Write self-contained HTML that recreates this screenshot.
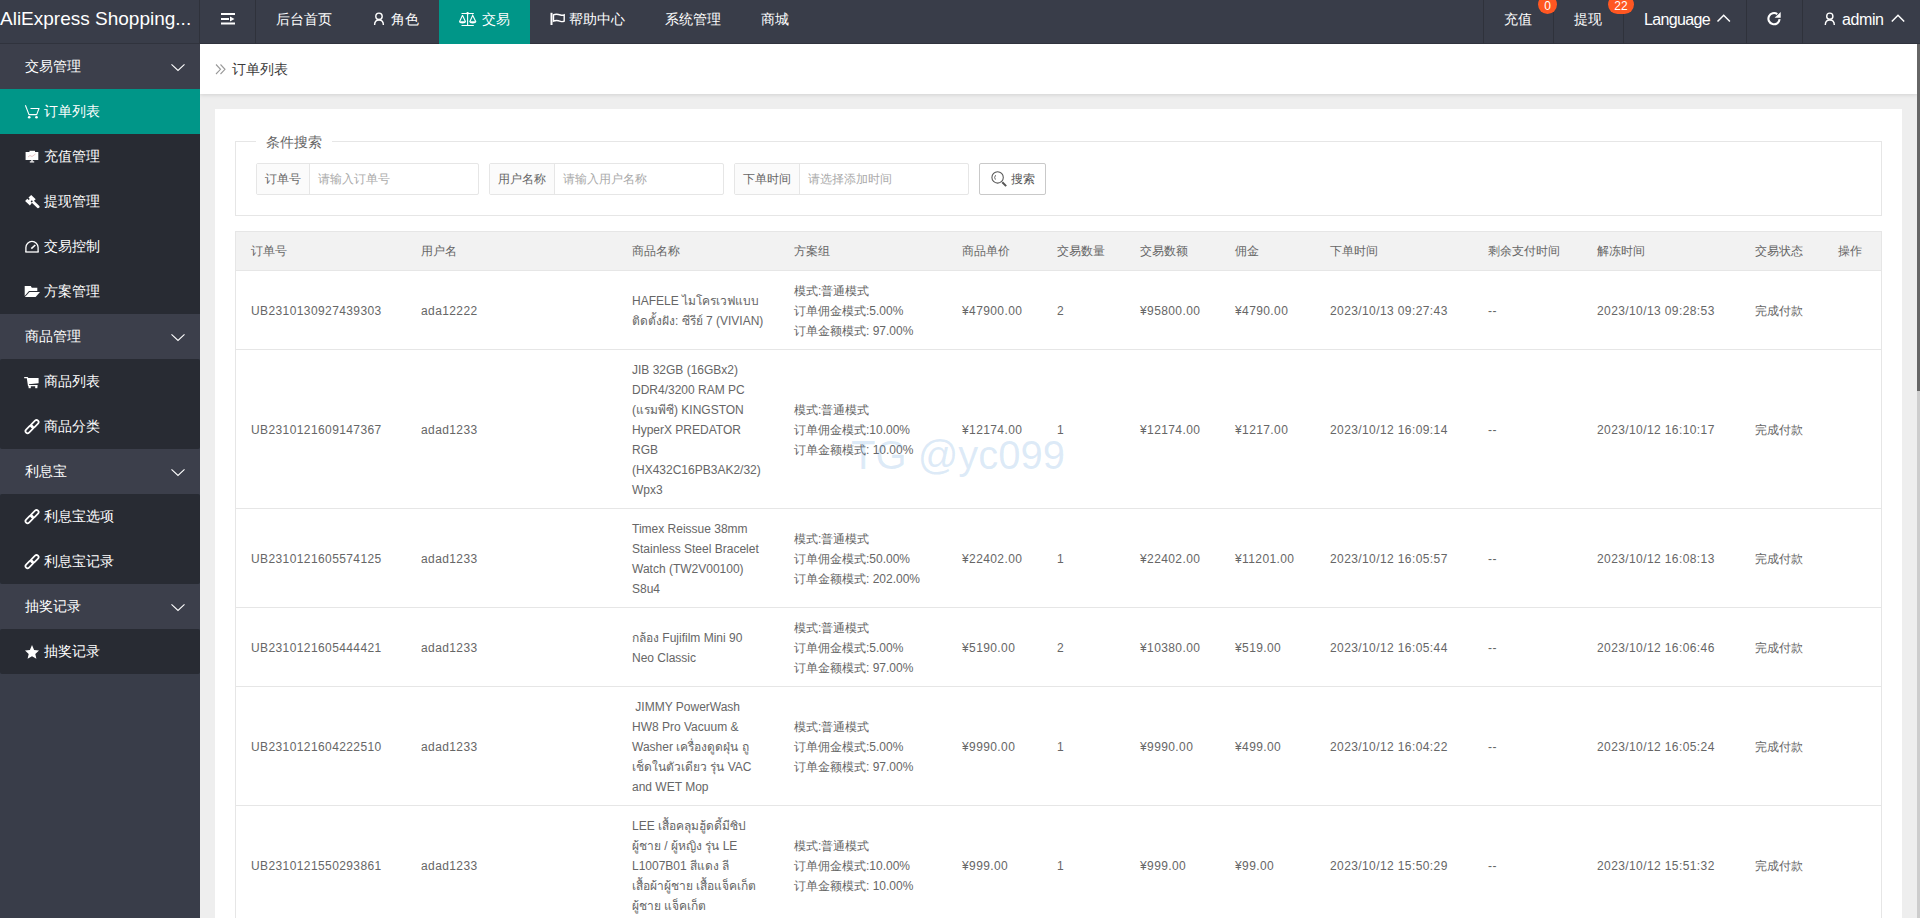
<!DOCTYPE html>
<html><head><meta charset="utf-8">
<style>
*{box-sizing:border-box;margin:0;padding:0}
html,body{width:1920px;height:918px;overflow:hidden;background:#eeeeee;font-family:"Liberation Sans",sans-serif;}
.hdr{position:absolute;left:0;top:0;width:1920px;height:44px;background:#393D49;color:#fff;font-size:14px}
.logo{position:absolute;left:0;top:0;width:200px;height:44px;line-height:38px;font-size:19px;white-space:nowrap;overflow:hidden;color:#fff}
.sep{position:absolute;top:0;width:1px;height:44px;background:#2f323b}
.nv{position:absolute;top:0;height:44px;line-height:39px;white-space:nowrap;color:#fff}
.nv svg{position:absolute}
.act{background:#009688}
.badge{position:absolute;background:#FF5722;color:#fff;font-size:12px;line-height:18px;height:18px;text-align:center;border-radius:9px}
.side{position:absolute;left:0;top:44px;width:200px;height:874px;background:#393D49;color:#fff;font-size:14px}
.grp{position:absolute;left:0;width:200px;height:45px;line-height:45px;background:#3C3F4B}
.sub{position:absolute;left:0;width:200px;background:#282B33;border-radius:2px}
.it{position:absolute;left:0;width:200px;height:45px;line-height:45px}
.it svg,.grp svg{position:absolute}
.main{position:absolute;left:200px;top:44px;width:1717px;height:874px;background:#eeeeee;overflow:hidden}
.bc{position:absolute;left:0;top:0;width:1717px;height:50px;background:#fff;box-shadow:0 1px 4px rgba(0,0,0,.12);font-size:14px;color:#333}
.card{position:absolute;left:15px;top:65px;width:1687px;height:900px;background:#fff}
.scroll{position:absolute;left:1917px;top:44px;width:3px;height:874px;background:#cdcdcd}
.thumb{position:absolute;left:1917px;top:44px;width:3px;height:347px;background:#666}
.fs{position:absolute;border:1px solid #e6e6e6}
.lg{position:absolute}
.ig{position:absolute;height:32px;border:1px solid #e6e6e6;border-radius:2px;background:#fff;font-size:12px}
.lb{position:absolute;left:0;top:0;height:30px;line-height:30px;background:#FBFBFB;border-right:1px solid #e6e6e6;color:#666;text-align:center}
.ph{position:absolute;left:0;top:0;height:30px;line-height:30px;color:#aaa}
.btn{position:absolute;height:32px;border:1px solid #C9C9C9;border-radius:2px;background:#fff;font-size:12px;color:#555}
.tbl{position:absolute;border:1px solid #e6e6e6;border-bottom:none;background:#fff}
.th{position:absolute;background:#f2f2f2}
.hl{position:absolute;height:1px;background:#e6e6e6}
.c{position:absolute;display:flex;align-items:center;white-space:nowrap;font-size:12px;line-height:20px;color:#666}
.l{letter-spacing:0.4px}
.wm{position:absolute;font-size:40px;line-height:46px;color:rgba(100,160,220,0.22);white-space:nowrap}
</style></head><body>
<div class="hdr">
  <div class="logo">AliExpress Shopping...</div>
  <div style="position:absolute;left:0;top:43px;width:1920px;height:1px;background:#30333D"></div>
  <div class="sep" style="left:199px"></div>
  <div class="sep" style="left:255px"></div>
  <svg style="position:absolute;left:0;top:0" width="1920" height="44">
    <g fill="#fff">
      <rect x="221" y="13" width="14" height="2"/>
      <rect x="221" y="18" width="8" height="2"/>
      <path d="M230 16.5 L234.5 19 L230 21.5 Z"/>
      <rect x="221" y="22.5" width="14" height="2"/>
    </g>
    <rect x="439" y="0" width="91" height="44" fill="#009688"/>
    <g fill="none" stroke="#fff" stroke-width="1.4">
      <circle cx="379" cy="16.3" r="3.2"/>
      <path d="M374.6 25 C374.6 21.8 376.3 20 379 20 C381.7 20 383.4 21.8 383.4 25"/>
    </g>
    <g fill="none" stroke="#fff" stroke-width="1.1">
      <path d="M461.5 13.5 H473.8 M467.6 13 V25.5 M461.5 25.5 H473.8"/>
      <path d="M462.5 15.3 L459.5 21.8 M462.5 15.3 L465.5 21.8 M469.8 21.8 L472.7 15.3 L475.8 21.8"/>
    </g>
    <g fill="#fff">
      <path d="M459 21.3 H466 C466 23 464.6 23.4 462.5 23.4 C460.4 23.4 459 23 459 21.3Z"/>
      <path d="M469.3 21.3 H476.3 C476.3 23 474.9 23.4 472.8 23.4 C470.7 23.4 469.3 23 469.3 21.3Z"/>
      <circle cx="467.6" cy="13.2" r="1.2"/>
    </g>
    <g fill="none" stroke="#fff">
      <path d="M551.5 12.8 V25" stroke-width="2"/>
      <path d="M553.5 14.8 C556 13.6 558.5 14.3 560.5 15 C562 15.5 563.3 15.2 564.2 14.8 V21.2 C563.3 21.6 562 21.9 560.5 21.3 C558.5 20.6 556 20 553.5 21.2 Z" stroke-width="1.4"/>
    </g>
    <g fill="none" stroke="#fff" stroke-width="1.5">
      <path d="M1717.5 21.5 L1723.7 15.3 L1729.9 21.5"/>
      <path d="M1891.8 21.5 L1898 15.3 L1904.2 21.5"/>
      <circle cx="1829.8" cy="16.2" r="3.1" stroke-width="1.4"/>
      <path d="M1825.3 25 C1825.3 21.8 1827 20 1829.8 20 C1832.6 20 1834.3 21.8 1834.3 25" stroke-width="1.4"/>
      <path d="M1779.6 19.2 A5.6 5.6 0 1 1 1777.3 14.1" stroke-width="2.1"/>
    </g>
    <path d="M1774.6 17.8 L1780.7 12.1 L1780.7 17.8 Z" fill="#fff"/>
  </svg>
  <div class="nv" style="left:276px">后台首页</div>
  <div class="nv" style="left:391px">角色</div>
  <div class="nv" style="left:482px">交易</div>
  <div class="nv" style="left:569px">帮助中心</div>
  <div class="nv" style="left:665px">系统管理</div>
  <div class="nv" style="left:761px">商城</div>
  <div class="sep" style="left:1483px"></div>
  <div class="sep" style="left:1553px"></div>
  <div class="sep" style="left:1623px"></div>
  <div class="sep" style="left:1746px"></div>
  <div class="sep" style="left:1802px"></div>
  <div class="nv" style="left:1504px">充值</div>
  <div class="nv" style="left:1574px">提现</div>
  <div class="badge" style="left:1538px;top:-5px;width:19px;height:19px;line-height:23px;border-radius:50%">0</div>
  <div class="badge" style="left:1608px;top:-5px;width:26px;height:19px;line-height:23px;border-radius:10px">22</div>
  <div class="nv" style="left:1644px;font-size:16px;letter-spacing:-0.65px;line-height:40px">Language</div>
  <div class="nv" style="left:1842px;font-size:16px;letter-spacing:-0.4px;line-height:40px">admin</div>
</div>
<div class="side">
  <div class="grp" style="top:0">
    <span style="position:absolute;left:25px">交易管理</span>
  </div>
  <div class="sub" style="top:45px;height:270px">
    <div class="it" style="top:0;background:#009688;border-radius:0"><span style="position:absolute;left:44px">订单列表</span></div>
    <div class="it" style="top:45px"><span style="position:absolute;left:44px">充值管理</span></div>
    <div class="it" style="top:90px"><span style="position:absolute;left:44px">提现管理</span></div>
    <div class="it" style="top:135px"><span style="position:absolute;left:44px">交易控制</span></div>
    <div class="it" style="top:180px"><span style="position:absolute;left:44px">方案管理</span></div>
  </div>
  <div class="grp" style="top:270px"><span style="position:absolute;left:25px">商品管理</span></div>
  <div class="sub" style="top:315px;height:90px">
    <div class="it" style="top:0"><span style="position:absolute;left:44px">商品列表</span></div>
    <div class="it" style="top:45px"><span style="position:absolute;left:44px">商品分类</span></div>
  </div>
  <div class="grp" style="top:405px"><span style="position:absolute;left:25px">利息宝</span></div>
  <div class="sub" style="top:450px;height:90px">
    <div class="it" style="top:0"><span style="position:absolute;left:44px">利息宝选项</span></div>
    <div class="it" style="top:45px"><span style="position:absolute;left:44px">利息宝记录</span></div>
  </div>
  <div class="grp" style="top:540px"><span style="position:absolute;left:25px">抽奖记录</span></div>
  <div class="sub" style="top:585px;height:45px">
    <div class="it" style="top:0"><span style="position:absolute;left:44px">抽奖记录</span></div>
  </div>
  <svg style="position:absolute;left:0;top:0" width="200" height="874">
    <g fill="none" stroke="#fff" stroke-width="1.1">
      <path d="M171.5 20.3 L178 26.5 L184.5 20.3"/>
      <path d="M171.5 290.3 L178 296.5 L184.5 290.3"/>
      <path d="M171.5 425.3 L178 431.5 L184.5 425.3"/>
      <path d="M171.5 560.3 L178 566.5 L184.5 560.3"/>
    </g>
    <g fill="none" stroke="#fff" stroke-width="1.1" stroke-linejoin="round">
      <path d="M25.4 61.2 L29 70.6 H36.7 L39 64.5 H30.5"/>
    </g>
    <g fill="#fff">
      <circle cx="29.2" cy="73.3" r="1.3"/><circle cx="36.5" cy="73.3" r="1.3"/>
    </g>
    <g fill="#fff">
      <rect x="25.6" y="108" width="12.7" height="8"/>
      <rect x="29.5" y="106.8" width="5.5" height="1.5"/>
      <rect x="31.3" y="116" width="1.4" height="1.6"/>
      <rect x="29.8" y="117.3" width="4.4" height="1.2"/>
    </g>
    <path d="M28 113 L30 111.5 L32 112.5 L35.5 110" stroke="#d8a0a0" stroke-width="0.6" fill="none"/>
    <g fill="#fff">
      <path d="M31.2 151 L35.7 155.2 L33.2 157.5 L31.8 156.2 L30.6 157.4 L32 158.8 L29.9 161.4 L25.1 157 L27.3 154.8 L28.6 156.1 L29.8 154.9 L28.5 153.6 Z"/>
      <path d="M31.6 158.6 L33.6 156.6 L39.4 162 C39.8 162.5 39.6 163.3 39 163.8 C38.5 164.2 37.9 164.3 37.4 163.9 Z"/>
    </g>
    <g fill="none" stroke="#fff" stroke-width="1.3">
      <path d="M25.9 208 V203.5 A6.1 6.1 0 0 1 38.1 203.5 V208"/>
      <path d="M25.3 208 H38.7"/>
      <path d="M31.3 204.6 L35.3 201" stroke-width="1.6"/>
    </g>
    <g fill="#fff">
      <path d="M24.7 253 V242 H30.8 L31.8 243.8 H37.3 V247 H29 L24.7 252Z"/>
      <path d="M24.9 253 L29.5 248 H40 L35.6 253Z"/>
    </g>
    <g fill="#fff">
      <path d="M24.2 333 H27.6 L28.4 334 H38.6 V339.3 L28.9 340.2 L29.1 341 H37.6 V342.3 H28 L26.8 334.3 H24.2Z"/>
      <rect x="28.6" y="342" width="2.2" height="2.2"/><rect x="35.2" y="342" width="2.2" height="2.2"/>
    </g>
    <g id="lnk" fill="none" stroke="#fff" stroke-width="1.7">
      <rect x="-4.5" y="-2.1" width="9" height="4.2" rx="2.1" transform="translate(29.3 385.4) rotate(-45)"/>
      <rect x="-4.5" y="-2.1" width="9" height="4.2" rx="2.1" transform="translate(34.8 379.9) rotate(-45)"/>
    </g>
    <use href="#lnk" y="90"/>
    <use href="#lnk" y="135"/>
    <path fill="#fff" d="M32 601 L34.1 605.9 L39 606.5 L35.3 609.9 L36.4 614.7 L32 612.2 L27.6 614.7 L28.7 609.9 L25 606.5 L29.9 605.9Z"/>

  </svg>
</div>
<div class="main">
  <div class="bc">
    <svg style="position:absolute;left:15px;top:20px" width="12" height="12"><g fill="none" stroke="#999" stroke-width="1.1"><path d="M1 0.5 L5.5 5.3 L1 10"/><path d="M5.5 0.5 L10 5.3 L5.5 10"/></g></svg>
    <span style="position:absolute;left:32px;top:15px;line-height:20px;font-size:14px;color:#3a3a3a">订单列表</span>
  </div>
  <div class="card"></div>
  <div class="fs" style="left:35px;top:97px;width:1647px;height:75px"></div>
  <div class="lg" style="left:56px;top:90px;width:76px;height:16px;background:#fff"></div>
  <span style="position:absolute;left:66px;top:88px;line-height:20px;font-size:14px;color:#666">条件搜索</span>
  <div class="ig" style="left:56px;top:119px;width:223px"><div class="lb" style="width:53px">订单号</div><div class="ph" style="left:61px">请输入订单号</div></div>
  <div class="ig" style="left:289px;top:119px;width:235px"><div class="lb" style="width:65px">用户名称</div><div class="ph" style="left:73px">请输入用户名称</div></div>
  <div class="ig" style="left:534px;top:119px;width:235px"><div class="lb" style="width:65px">下单时间</div><div class="ph" style="left:73px">请选择添加时间</div></div>
  <div class="btn" style="left:779px;top:119px;width:67px">
    <svg style="position:absolute;left:10px;top:7px" width="20" height="20"><g fill="none" stroke="#555"><circle cx="7.6" cy="6.4" r="5.7" stroke-width="1.05"/><path d="M12.3 11.3 L16.2 15.1" stroke-width="2"/><path d="M5.6 4.2 A3.6 3.6 0 0 0 5.4 8.6" stroke-width="0.9"/></g></svg>
    <span style="position:absolute;left:31px;top:5px;line-height:20px">搜索</span>
  </div>
<!--TBL-->
<div class="tbl" style="left:35px;top:187px;width:1647px;height:687px"></div>
<div class="th" style="left:36px;top:188px;width:1645px;height:38px"></div>
<div class="hl" style="left:36px;top:226px;width:1645px"></div>
<div class="c" style="left:51px;top:188px;height:38px">订单号</div>
<div class="c" style="left:221px;top:188px;height:38px">用户名</div>
<div class="c" style="left:432px;top:188px;height:38px">商品名称</div>
<div class="c" style="left:594px;top:188px;height:38px">方案组</div>
<div class="c" style="left:762px;top:188px;height:38px">商品单价</div>
<div class="c" style="left:857px;top:188px;height:38px">交易数量</div>
<div class="c" style="left:940px;top:188px;height:38px">交易数额</div>
<div class="c" style="left:1035px;top:188px;height:38px">佣金</div>
<div class="c" style="left:1130px;top:188px;height:38px">下单时间</div>
<div class="c" style="left:1288px;top:188px;height:38px">剩余支付时间</div>
<div class="c" style="left:1397px;top:188px;height:38px">解冻时间</div>
<div class="c" style="left:1555px;top:188px;height:38px">交易状态</div>
<div class="c" style="left:1638px;top:188px;height:38px">操作</div>
<div class="c l" style="left:51px;top:228px;height:78px">UB2310130927439303</div>
<div class="c l" style="left:221px;top:228px;height:78px">ada12222</div>
<div class="c" style="left:432px;top:228px;height:78px">HAFELE ไมโครเวฟแบบ<br>ติดตั้งฝัง: ซีรีย์ 7 (VIVIAN)</div>
<div class="c" style="left:594px;top:228px;height:78px">模式:普通模式<br>订单佣金模式:5.00%<br>订单金额模式: 97.00%</div>
<div class="c l" style="left:762px;top:228px;height:78px">¥47900.00</div>
<div class="c l" style="left:857px;top:228px;height:78px">2</div>
<div class="c l" style="left:940px;top:228px;height:78px">¥95800.00</div>
<div class="c l" style="left:1035px;top:228px;height:78px">¥4790.00</div>
<div class="c l" style="left:1130px;top:228px;height:78px">2023/10/13 09:27:43</div>
<div class="c l" style="left:1288px;top:228px;height:78px">--</div>
<div class="c l" style="left:1397px;top:228px;height:78px">2023/10/13 09:28:53</div>
<div class="c" style="left:1555px;top:228px;height:78px">完成付款</div>
<div class="hl" style="left:36px;top:305px;width:1645px"></div>
<div class="c l" style="left:51px;top:307px;height:158px">UB2310121609147367</div>
<div class="c l" style="left:221px;top:307px;height:158px">adad1233</div>
<div class="c" style="left:432px;top:307px;height:158px">JIB 32GB (16GBx2)<br>DDR4/3200 RAM PC<br>(แรมพีซี) KINGSTON<br>HyperX PREDATOR<br>RGB<br>(HX432C16PB3AK2/32)<br>Wpx3</div>
<div class="c" style="left:594px;top:307px;height:158px">模式:普通模式<br>订单佣金模式:10.00%<br>订单金额模式: 10.00%</div>
<div class="c l" style="left:762px;top:307px;height:158px">¥12174.00</div>
<div class="c l" style="left:857px;top:307px;height:158px">1</div>
<div class="c l" style="left:940px;top:307px;height:158px">¥12174.00</div>
<div class="c l" style="left:1035px;top:307px;height:158px">¥1217.00</div>
<div class="c l" style="left:1130px;top:307px;height:158px">2023/10/12 16:09:14</div>
<div class="c l" style="left:1288px;top:307px;height:158px">--</div>
<div class="c l" style="left:1397px;top:307px;height:158px">2023/10/12 16:10:17</div>
<div class="c" style="left:1555px;top:307px;height:158px">完成付款</div>
<div class="hl" style="left:36px;top:464px;width:1645px"></div>
<div class="c l" style="left:51px;top:466px;height:98px">UB2310121605574125</div>
<div class="c l" style="left:221px;top:466px;height:98px">adad1233</div>
<div class="c" style="left:432px;top:466px;height:98px">Timex Reissue 38mm<br>Stainless Steel Bracelet<br>Watch (TW2V00100)<br>S8u4</div>
<div class="c" style="left:594px;top:466px;height:98px">模式:普通模式<br>订单佣金模式:50.00%<br>订单金额模式: 202.00%</div>
<div class="c l" style="left:762px;top:466px;height:98px">¥22402.00</div>
<div class="c l" style="left:857px;top:466px;height:98px">1</div>
<div class="c l" style="left:940px;top:466px;height:98px">¥22402.00</div>
<div class="c l" style="left:1035px;top:466px;height:98px">¥11201.00</div>
<div class="c l" style="left:1130px;top:466px;height:98px">2023/10/12 16:05:57</div>
<div class="c l" style="left:1288px;top:466px;height:98px">--</div>
<div class="c l" style="left:1397px;top:466px;height:98px">2023/10/12 16:08:13</div>
<div class="c" style="left:1555px;top:466px;height:98px">完成付款</div>
<div class="hl" style="left:36px;top:563px;width:1645px"></div>
<div class="c l" style="left:51px;top:565px;height:78px">UB2310121605444421</div>
<div class="c l" style="left:221px;top:565px;height:78px">adad1233</div>
<div class="c" style="left:432px;top:565px;height:78px">กล้อง Fujifilm Mini 90<br>Neo Classic</div>
<div class="c" style="left:594px;top:565px;height:78px">模式:普通模式<br>订单佣金模式:5.00%<br>订单金额模式: 97.00%</div>
<div class="c l" style="left:762px;top:565px;height:78px">¥5190.00</div>
<div class="c l" style="left:857px;top:565px;height:78px">2</div>
<div class="c l" style="left:940px;top:565px;height:78px">¥10380.00</div>
<div class="c l" style="left:1035px;top:565px;height:78px">¥519.00</div>
<div class="c l" style="left:1130px;top:565px;height:78px">2023/10/12 16:05:44</div>
<div class="c l" style="left:1288px;top:565px;height:78px">--</div>
<div class="c l" style="left:1397px;top:565px;height:78px">2023/10/12 16:06:46</div>
<div class="c" style="left:1555px;top:565px;height:78px">完成付款</div>
<div class="hl" style="left:36px;top:642px;width:1645px"></div>
<div class="c l" style="left:51px;top:644px;height:118px">UB2310121604222510</div>
<div class="c l" style="left:221px;top:644px;height:118px">adad1233</div>
<div class="c" style="left:432px;top:644px;height:118px">&nbsp;JIMMY PowerWash<br>HW8 Pro Vacuum &amp;<br>Washer เครื่องดูดฝุ่น ถู<br>เช็ดในตัวเดียว รุ่น VAC<br>and WET Mop</div>
<div class="c" style="left:594px;top:644px;height:118px">模式:普通模式<br>订单佣金模式:5.00%<br>订单金额模式: 97.00%</div>
<div class="c l" style="left:762px;top:644px;height:118px">¥9990.00</div>
<div class="c l" style="left:857px;top:644px;height:118px">1</div>
<div class="c l" style="left:940px;top:644px;height:118px">¥9990.00</div>
<div class="c l" style="left:1035px;top:644px;height:118px">¥499.00</div>
<div class="c l" style="left:1130px;top:644px;height:118px">2023/10/12 16:04:22</div>
<div class="c l" style="left:1288px;top:644px;height:118px">--</div>
<div class="c l" style="left:1397px;top:644px;height:118px">2023/10/12 16:05:24</div>
<div class="c" style="left:1555px;top:644px;height:118px">完成付款</div>
<div class="hl" style="left:36px;top:761px;width:1645px"></div>
<div class="c l" style="left:51px;top:763px;height:118px">UB2310121550293861</div>
<div class="c l" style="left:221px;top:763px;height:118px">adad1233</div>
<div class="c" style="left:432px;top:763px;height:118px">LEE เสื้อคลุมฮู้ดดี้มีซิป<br>ผู้ชาย / ผู้หญิง รุ่น LE<br>L1007B01 สีแดง ลี<br>เสื้อผ้าผู้ชาย เสื้อแจ็คเก็ต<br>ผู้ชาย แจ็คเก็ต</div>
<div class="c" style="left:594px;top:763px;height:118px">模式:普通模式<br>订单佣金模式:10.00%<br>订单金额模式: 10.00%</div>
<div class="c l" style="left:762px;top:763px;height:118px">¥999.00</div>
<div class="c l" style="left:857px;top:763px;height:118px">1</div>
<div class="c l" style="left:940px;top:763px;height:118px">¥999.00</div>
<div class="c l" style="left:1035px;top:763px;height:118px">¥99.00</div>
<div class="c l" style="left:1130px;top:763px;height:118px">2023/10/12 15:50:29</div>
<div class="c l" style="left:1288px;top:763px;height:118px">--</div>
<div class="c l" style="left:1397px;top:763px;height:118px">2023/10/12 15:51:32</div>
<div class="c" style="left:1555px;top:763px;height:118px">完成付款</div>
<!--/TBL-->
  <div class="wm" style="left:651px;top:388px">TG @yc099</div>
</div>
<div class="scroll"></div><div class="thumb"></div>
</body></html>
